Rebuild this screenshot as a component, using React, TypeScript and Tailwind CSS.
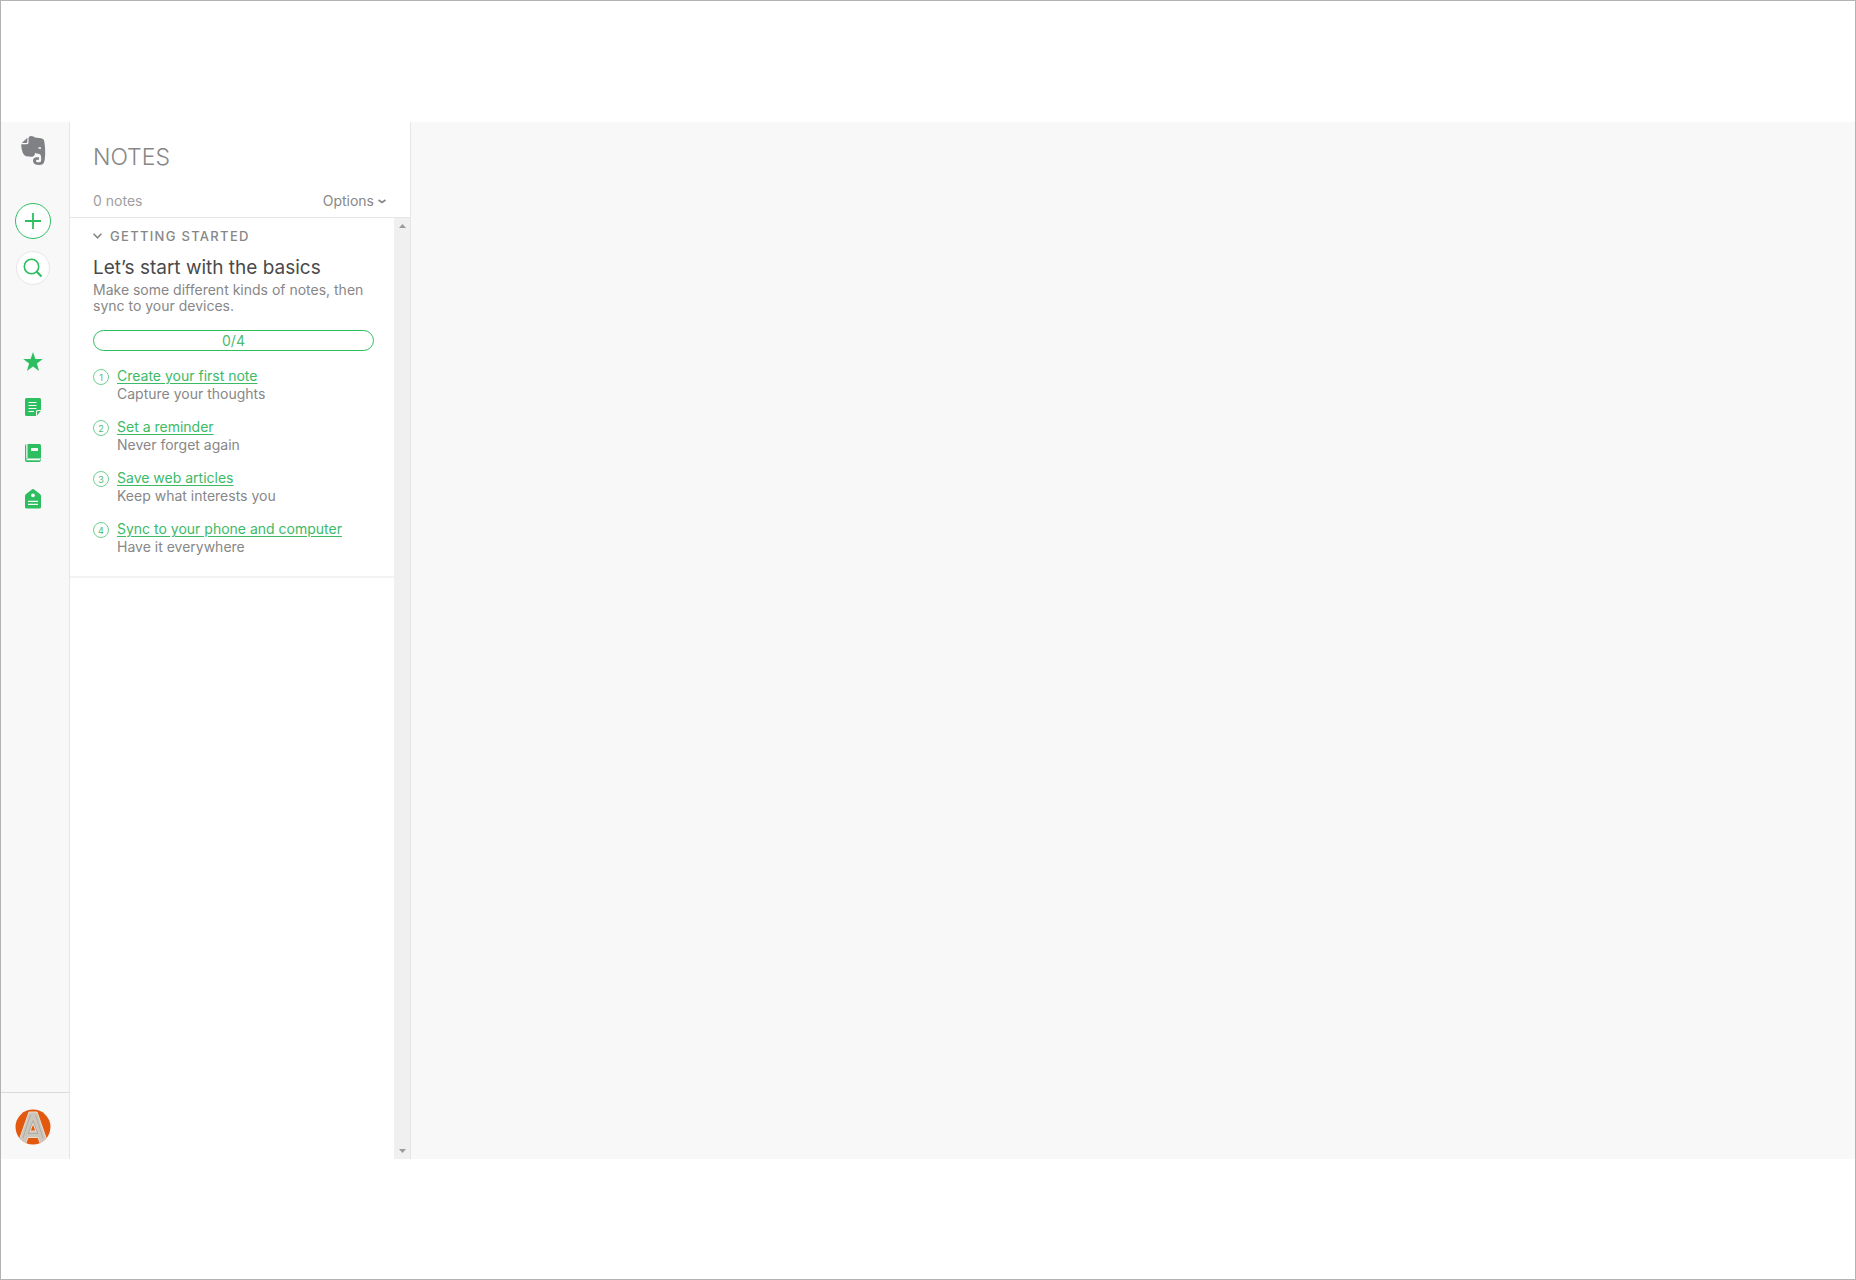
import React from 'react';

interface Step {
  title: string;
  text: string;
}

const steps: Step[] = [
  { title: 'Create your first note', text: 'Capture your thoughts' },
  { title: 'Set a reminder', text: 'Never forget again' },
  { title: 'Save web articles', text: 'Keep what interests you' },
  { title: 'Sync to your phone and computer', text: 'Have it everywhere' },
];

const ElephantLogo = () => (
  <svg width="25" height="29" viewBox="0 0 25 29" fill="currentColor">
    <path d="M.8 7L6.300 1.700V6q0 1-1 1z" />
    <path
      fillRule="evenodd"
      d="M7.500 2Q8 0 10 0q3 0 4 1.500l6 .8q3 .5 3.300 3.200 1 5.500.9 11.500-.2 7-1.200 9.500-1 2.500-4.800 2.500-6.200 0-6.200-4.200 0-3.600 3.800-3.600H18v2.600h-1.700q-1.300 0-1.300 1.200t1.800 1.200h1.700q1.700 0 1.700-2.200l-.2-4q-.3-2-2.500-2.200l-2.300-.3q-.7-.2-1-1-.6 4.500-3.700 4.300l-5-.6q-3-.7-4-4.200Q0 11 .2 8.200H6q1.500 0 1.500-1.700zM17 12.800q2-.8 3.200.4.200-2.200-1.500-2.200-1.500 0-1.700 1.800z"
    />
  </svg>
);

const PlusIcon = () => (
  <svg width="16" height="16" viewBox="0 0 16 16" fill="none" stroke="currentColor" strokeWidth="1.8">
    <path d="M8 0v16M0 8h16" />
  </svg>
);

const SearchIcon = () => (
  <svg width="20" height="20" viewBox="0 0 20 20" fill="none" stroke="currentColor" strokeWidth="1.6">
    <circle cx="8.5" cy="8.5" r="7.2" />
    <path d="M13.500 13.500l5 5" strokeWidth="2.2" />
  </svg>
);

const StarIcon = () => (
  <svg width="20" height="19" viewBox="0 0 18 17.500" fill="currentColor">
    <path d="M9 0l2.200 6.500H18l-5.400 4.200 2 6.800L9 13.400l-5.600 4.100 2-6.800L0 6.500h6.800z" />
  </svg>
);

const NoteIcon = () => (
  <svg width="16" height="18" viewBox="0 0 16 18" fill="currentColor">
    <path d="M1.500 0h13A1.500 1.500 0 0 1 16 1.500V12h-3.500a1.500 1.500 0 0 0-1.500 1.500V18H1.500A1.500 1.500 0 0 1 0 16.500v-15A1.500 1.500 0 0 1 1.500 0z" />
    <path d="M12 17.600V14a1 1 0 0 1 1-1h2.800z" />
    <path d="M3.500 4.500h8M3.500 7.500h8M3.500 10.500h8M3.500 13.500h5.500" stroke="#f8f8f8" strokeWidth="1.200" />
  </svg>
);

const NotebookIcon = () => (
  <svg width="16" height="18" viewBox="0 0 16 18" fill="currentColor">
    <path d="M0 1.500Q0 .5 1.200.3V14.600H15.700V16.500Q15.500 18 14 18H1.800Q0 18 0 16.200z" />
    <path d="M2.500 0H14.500Q16 0 16 1.500V14H2.500z" />
    <path d="M1.500 15.600H15" stroke="#f8f8f8" strokeWidth="1.400" />
    <path d="M6 4h7v3H6z" fill="#f8f8f8" />
  </svg>
);

const TagIcon = () => (
  <svg width="16" height="20" viewBox="0 0 16 20" fill="currentColor">
    <path d="M6.900.400a1.800 1.800 0 0 1 2.200 0L15 5.100q1 .8 1 2V18a1.500 1.500 0 0 1-1.500 1.500h-13A1.500 1.500 0 0 1 0 18V7.100q0-1.200 1-2z" />
    <circle cx="8" cy="6.300" r="1.900" fill="#f8f8f8" />
    <path d="M3 12.300h10M3 15.300h10" stroke="#f8f8f8" strokeWidth="1.300" />
  </svg>
);

const AvatarIcon = () => (
  <svg width="36" height="36" viewBox="0 0 36 36">
    <defs>
      <clipPath id="avatar">
        <circle cx="18" cy="18" r="17.500" />
      </clipPath>
    </defs>
    <g clipPath="url(#avatar)">
      <rect width="36" height="36" fill="#e2580f" />
      <path
        d="M14 3h8l9.500 27-6 5L23 28.500H13L10.500 35l-6-5zM18 14.500l-2.800 7.500h5.600z"
        fill="#cbc7bf"
        fillRule="evenodd"
        stroke="#eadccb"
        strokeWidth="1"
      />
      <path d="M15.500 5.500L8 29M20.500 5.500l7.500 24M18 11.500l-5 13h10z" fill="none" stroke="#aba79f" strokeWidth=".8" />
    </g>
  </svg>
);

const navItems = [
  { label: 'Shortcuts', icon: <StarIcon /> },
  { label: 'Notes', icon: <NoteIcon /> },
  { label: 'Notebooks', icon: <NotebookIcon /> },
  { label: 'Tags', icon: <TagIcon /> },
];

const Sidebar: React.FC = () => (
  <nav className="flex w-[69px] shrink-0 flex-col justify-between border-r border-[#e6e6e6] bg-[#f8f8f8] text-[#2dbe60]">
    <div className="flex w-16 flex-col items-center pt-3.5">
      <a href="#home" aria-label="Home" className="text-[#808184]">
        <ElephantLogo />
      </a>
      <button
        aria-label="New note"
        className="mt-[38px] flex h-9 w-9 items-center justify-center rounded-full border border-[#2dbe60] bg-white"
      >
        <PlusIcon />
      </button>
      <button
        aria-label="Search"
        className="mt-3 flex h-[34px] w-[34px] items-center justify-center rounded-full border border-[#e6e6e6] bg-white"
      >
        <SearchIcon />
      </button>
      <div className="mt-[53px] flex flex-col">
        {navItems.map((item) => (
          <button key={item.label} aria-label={item.label} className="flex h-[46px] w-9 items-center justify-center">
            {item.icon}
          </button>
        ))}
      </div>
    </div>
    <div className="border-t border-[#dadada] pt-4 pb-3.5">
      <button aria-label="Account" className="flex w-16 justify-center">
        <AvatarIcon />
      </button>
    </div>
  </nav>
);

const GettingStarted: React.FC = () => (
  <section className="border-b-2 border-[#f3f3f3] pt-2.5 pr-5 pb-5 pl-[23px]">
    <button className="flex items-center gap-2 text-[13px] leading-4 font-medium tracking-widest text-[#878787]">
      <svg width="9" height="6" viewBox="0 0 9 6" fill="none" stroke="currentColor" strokeWidth="1.600">
        <path d="M.6.800l3.900 4 3.900-4" />
      </svg>
      GETTING STARTED
    </button>
    <h2 className="mt-3 text-[19px] leading-6 text-[#4a4a4a]">Let’s start with the basics</h2>
    <p className="mt-0.5 text-sm leading-4 text-[#878787]">Make some different kinds of notes, then sync to your devices.</p>
    <div className="mt-4 rounded-full border border-[#2dbe60] text-center text-sm leading-[19px] text-[#4cbb70]">0/4</div>
    <ol className="mt-4 flex flex-col gap-[15px]">
      {steps.map((step, i) => (
        <li key={step.title} className="flex gap-2 text-sm leading-[18px] text-[#878787]">
          <span className="mt-0.5 flex h-4 w-4 shrink-0 items-center justify-center rounded-full border border-[#6fcf92] text-[9px] leading-none text-[#4cbb70]">
            {i + 1}
          </span>
          <div>
            <a href="#step" className="text-[#3dba66] underline underline-offset-2">
              {step.title}
            </a>
            <p>{step.text}</p>
          </div>
        </li>
      ))}
    </ol>
  </section>
);

const NotesPanel: React.FC = () => (
  <div className="flex w-[341px] shrink-0 flex-col border-r border-[#e6e6e6] bg-white">
    <header className="border-b border-[#e6e6e6] pt-[19px] pr-6 pb-1.5 pl-[23px]">
      <h1 className="text-[23px] leading-8 font-light text-[#878787]">NOTES</h1>
      <div className="mt-[18px] flex items-center justify-between text-sm leading-5">
        <span className="text-[#a0a0a0]">0 notes</span>
        <button className="flex items-center gap-1 text-[#878787]">
          Options
          <svg width="8" height="5" viewBox="0 0 8 5" fill="none" stroke="currentColor" strokeWidth="1.800">
            <path d="M.5 1l3.500 2.500L7.500 1" />
          </svg>
        </button>
      </div>
    </header>
    <div className="flex flex-1">
      <div className="flex-1">
        <GettingStarted />
      </div>
      <div className="flex w-4 flex-col items-center justify-between bg-[#f0f0f0] py-1.5 text-[#9b9b9b]">
        <svg width="7" height="4" viewBox="0 0 7 4" fill="currentColor">
          <path d="M0 4l3.500-4L7 4z" />
        </svg>
        <svg width="7" height="4" viewBox="0 0 7 4" fill="currentColor">
          <path d="M0 0l3.500 4L7 0z" />
        </svg>
      </div>
    </div>
  </div>
);

const App: React.FC = () => {
  return (
    <div className="flex min-h-screen flex-col border border-[#b3b3b3] bg-white pt-[121px] pb-[120px] font-['Inter',sans-serif]">
      <div className="flex flex-1">
        <Sidebar />
        <NotesPanel />
        <main className="flex-1 bg-[#f8f8f8]" />
      </div>
    </div>
  );
};

export default App;
